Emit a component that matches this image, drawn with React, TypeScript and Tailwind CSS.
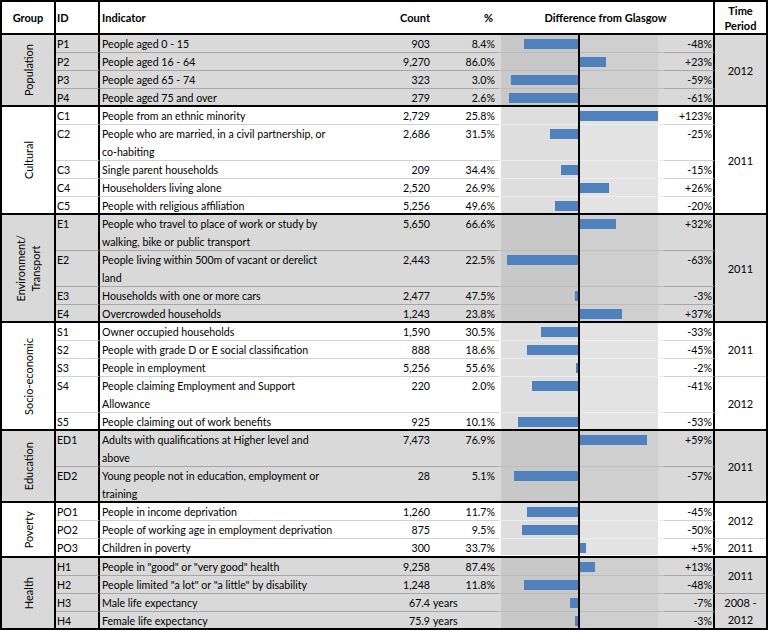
import { Fragment } from 'react';

type Row = { id: string; label: string; count: string; pct: string; diff: number; years?: boolean };
type Time = { text: string; span: number };
type Group = { name: string; gray: boolean; rows: Row[]; times: Time[] };

const COLS = 'grid grid-cols-[54px_44px_235px_98px_65px_166px_51px_51px]';

const SPAN: Record<number, string> = {
  1: 'row-span-1',
  2: 'row-span-2',
  3: 'row-span-3',
  4: 'row-span-4',
  5: 'row-span-5',
};

const groups: Group[] = [
  {
    name: 'Population',
    gray: true,
    times: [{ text: '2012', span: 4 }],
    rows: [
      { id: 'P1', label: 'People aged 0 - 15', count: '903', pct: '8.4%', diff: -48 },
      { id: 'P2', label: 'People aged 16 - 64', count: '9,270', pct: '86.0%', diff: 23 },
      { id: 'P3', label: 'People aged 65 - 74', count: '323', pct: '3.0%', diff: -59 },
      { id: 'P4', label: 'People aged 75 and over', count: '279', pct: '2.6%', diff: -61 },
    ],
  },
  {
    name: 'Cultural',
    gray: false,
    times: [{ text: '2011', span: 5 }],
    rows: [
      { id: 'C1', label: 'People from an ethnic minority', count: '2,729', pct: '25.8%', diff: 123 },
      { id: 'C2', label: 'People who are married, in a civil partnership, or\nco-habiting', count: '2,686', pct: '31.5%', diff: -25 },
      { id: 'C3', label: 'Single parent households', count: '209', pct: '34.4%', diff: -15 },
      { id: 'C4', label: 'Householders living alone', count: '2,520', pct: '26.9%', diff: 26 },
      { id: 'C5', label: 'People with religious affiliation', count: '5,256', pct: '49.6%', diff: -20 },
    ],
  },
  {
    name: 'Environment/\nTransport',
    gray: true,
    times: [{ text: '2011', span: 4 }],
    rows: [
      { id: 'E1', label: 'People who travel to place of work or study by\nwalking, bike or public transport', count: '5,650', pct: '66.6%', diff: 32 },
      { id: 'E2', label: 'People living within 500m of vacant or derelict\nland', count: '2,443', pct: '22.5%', diff: -63 },
      { id: 'E3', label: 'Households with one or more cars', count: '2,477', pct: '47.5%', diff: -3 },
      { id: 'E4', label: 'Overcrowded households', count: '1,243', pct: '23.8%', diff: 37 },
    ],
  },
  {
    name: 'Socio-economic',
    gray: false,
    times: [
      { text: '2011', span: 3 },
      { text: '2012', span: 2 },
    ],
    rows: [
      { id: 'S1', label: 'Owner occupied households', count: '1,590', pct: '30.5%', diff: -33 },
      { id: 'S2', label: 'People with grade D or E social classification', count: '888', pct: '18.6%', diff: -45 },
      { id: 'S3', label: 'People in employment', count: '5,256', pct: '55.6%', diff: -2 },
      { id: 'S4', label: 'People claiming Employment and Support\nAllowance', count: '220', pct: '2.0%', diff: -41 },
      { id: 'S5', label: 'People claiming out of work benefits', count: '925', pct: '10.1%', diff: -53 },
    ],
  },
  {
    name: 'Education',
    gray: true,
    times: [{ text: '2011', span: 2 }],
    rows: [
      { id: 'ED1', label: 'Adults with qualifications at Higher level and\nabove', count: '7,473', pct: '76.9%', diff: 59 },
      { id: 'ED2', label: 'Young people not in education, employment or\ntraining', count: '28', pct: '5.1%', diff: -57 },
    ],
  },
  {
    name: 'Poverty',
    gray: false,
    times: [
      { text: '2012', span: 2 },
      { text: '2011', span: 1 },
    ],
    rows: [
      { id: 'PO1', label: 'People in income deprivation', count: '1,260', pct: '11.7%', diff: -45 },
      { id: 'PO2', label: 'People of working age in employment deprivation', count: '875', pct: '9.5%', diff: -50 },
      { id: 'PO3', label: 'Children in poverty', count: '300', pct: '33.7%', diff: 5 },
    ],
  },
  {
    name: 'Health',
    gray: true,
    times: [
      { text: '2011', span: 2 },
      { text: '2008 -\n2012', span: 2 },
    ],
    rows: [
      { id: 'H1', label: 'People in "good" or "very good" health', count: '9,258', pct: '87.4%', diff: 13 },
      { id: 'H2', label: 'People limited "a lot" or "a little" by disability', count: '1,248', pct: '11.8%', diff: -48 },
      { id: 'H3', label: 'Male life expectancy', count: '67.4', pct: 'years', diff: -7, years: true },
      { id: 'H4', label: 'Female life expectancy', count: '75.9', pct: 'years', diff: -3, years: true },
    ],
  },
];

function Bar({ diff }: { diff: number }) {
  const w = Math.min(Math.abs(diff) * 1.13, 78);
  if (diff >= 0) {
    return <div className="absolute top-[4px] left-[82px] h-[10px] bg-[#4f81bd]" style={{ width: w }} />;
  }
  return <div className="absolute top-[4px] right-[86px] h-[10px] bg-[#4f81bd]" style={{ width: w }} />;
}

function GroupBlock({ g, last }: { g: Group; last: boolean }) {
  const sep = g.gray ? 'border-b-[#a6a6a6]' : 'border-b-[#d0d0d0]';
  const bandSep = g.gray ? 'border-b-[#bcbcbc]' : 'border-b-[#ededed]';
  const bandL = g.gray ? 'bg-[#c8c8c8]' : 'bg-[#dedede]';
  const bandR = g.gray ? 'bg-[#cfcfcf]' : 'bg-[#e3e3e3]';

  const starts = new Map<number, { t: Time; lastTime: boolean }>();
  let r = 0;
  g.times.forEach((t, i) => {
    starts.set(r, { t, lastTime: i === g.times.length - 1 });
    r += t.span;
  });

  return (
    <div className={`${COLS} ${g.gray ? 'bg-[#d9d9d9]' : 'bg-white'} ${last ? '' : 'border-b-2 border-black'}`}>
      <div className={`${SPAN[g.rows.length]} flex items-center justify-center border-r-2 border-r-black`}>
        <span className="rotate-180 whitespace-pre text-center text-[11px] leading-[15px] [writing-mode:vertical-rl]">
          {g.name}
        </span>
      </div>
      {g.rows.map((row, i) => {
        const isLast = i === g.rows.length - 1;
        const two = row.label.includes('\n');
        const h = two ? (isLast ? 'h-[34px]' : 'h-[36px]') : isLast ? 'h-[16px]' : 'h-[18px]';
        const b = isLast ? '' : `border-b ${sep}`;
        const start = starts.get(i);
        return (
          <Fragment key={row.id}>
            <div className={`${h} ${b} border-r-2 border-r-black pl-px`}>{row.id}</div>
            <div className={`${h} ${b} whitespace-pre pl-[2px]`}>{row.label}</div>
            <div className={`${h} ${b} pr-[3px] text-right`}>{row.count}</div>
            <div className={`${h} ${b} ${row.years ? 'text-left' : 'pr-[3px] text-right'}`}>{row.pct}</div>
            <div className={`${h} ${isLast ? '' : `border-b ${bandSep}`} relative`}>
              <div className={`absolute inset-y-0 left-[3px] w-[77px] ${bandL}`} />
              <div className={`absolute inset-y-0 left-[80px] w-[80px] ${bandR}`} />
              <Bar diff={row.diff} />
              <div className="absolute top-0 -bottom-px left-[80px] w-[2px] bg-black" />
            </div>
            <div className={`${h} ${b} border-r-2 border-r-black pr-px text-right`}>
              {row.diff > 0 ? `+${row.diff}%` : `${row.diff}%`}
            </div>
            {start && (
              <div
                className={`${SPAN[start.t.span]} col-start-8 flex items-center justify-center whitespace-pre text-center text-[11px] leading-[17px] ${
                  start.lastTime ? '' : `border-b ${sep}`
                }`}
              >
                {start.t.text}
              </div>
            )}
          </Fragment>
        );
      })}
    </div>
  );
}

export default function App() {
  return (
    <div className="h-[630px] w-[768px] bg-white">
      <div className="border-2 border-black text-[10.6px] leading-[18px] text-black [font-family:Lato,sans-serif]">
        <div className={`${COLS} h-[33px] border-b-2 border-black text-[11px] font-bold`}>
          <div className="flex items-center justify-center border-r-2 border-black">Group</div>
          <div className="flex items-center border-r-2 border-black pl-px">ID</div>
          <div className="flex items-center pl-[2px]">Indicator</div>
          <div className="flex items-center justify-end pr-[3px]">Count</div>
          <div className="flex items-center justify-end pr-[5px]">%</div>
          <div className="col-span-2 flex items-center justify-center border-r-2 border-black">
            Difference from Glasgow
          </div>
          <div className="flex flex-col items-center justify-center leading-[15px]">
            <span>Time</span>
            <span>Period</span>
          </div>
        </div>
        {groups.map((g, gi) => (
          <GroupBlock key={g.name} g={g} last={gi === groups.length - 1} />
        ))}
      </div>
    </div>
  );
}
